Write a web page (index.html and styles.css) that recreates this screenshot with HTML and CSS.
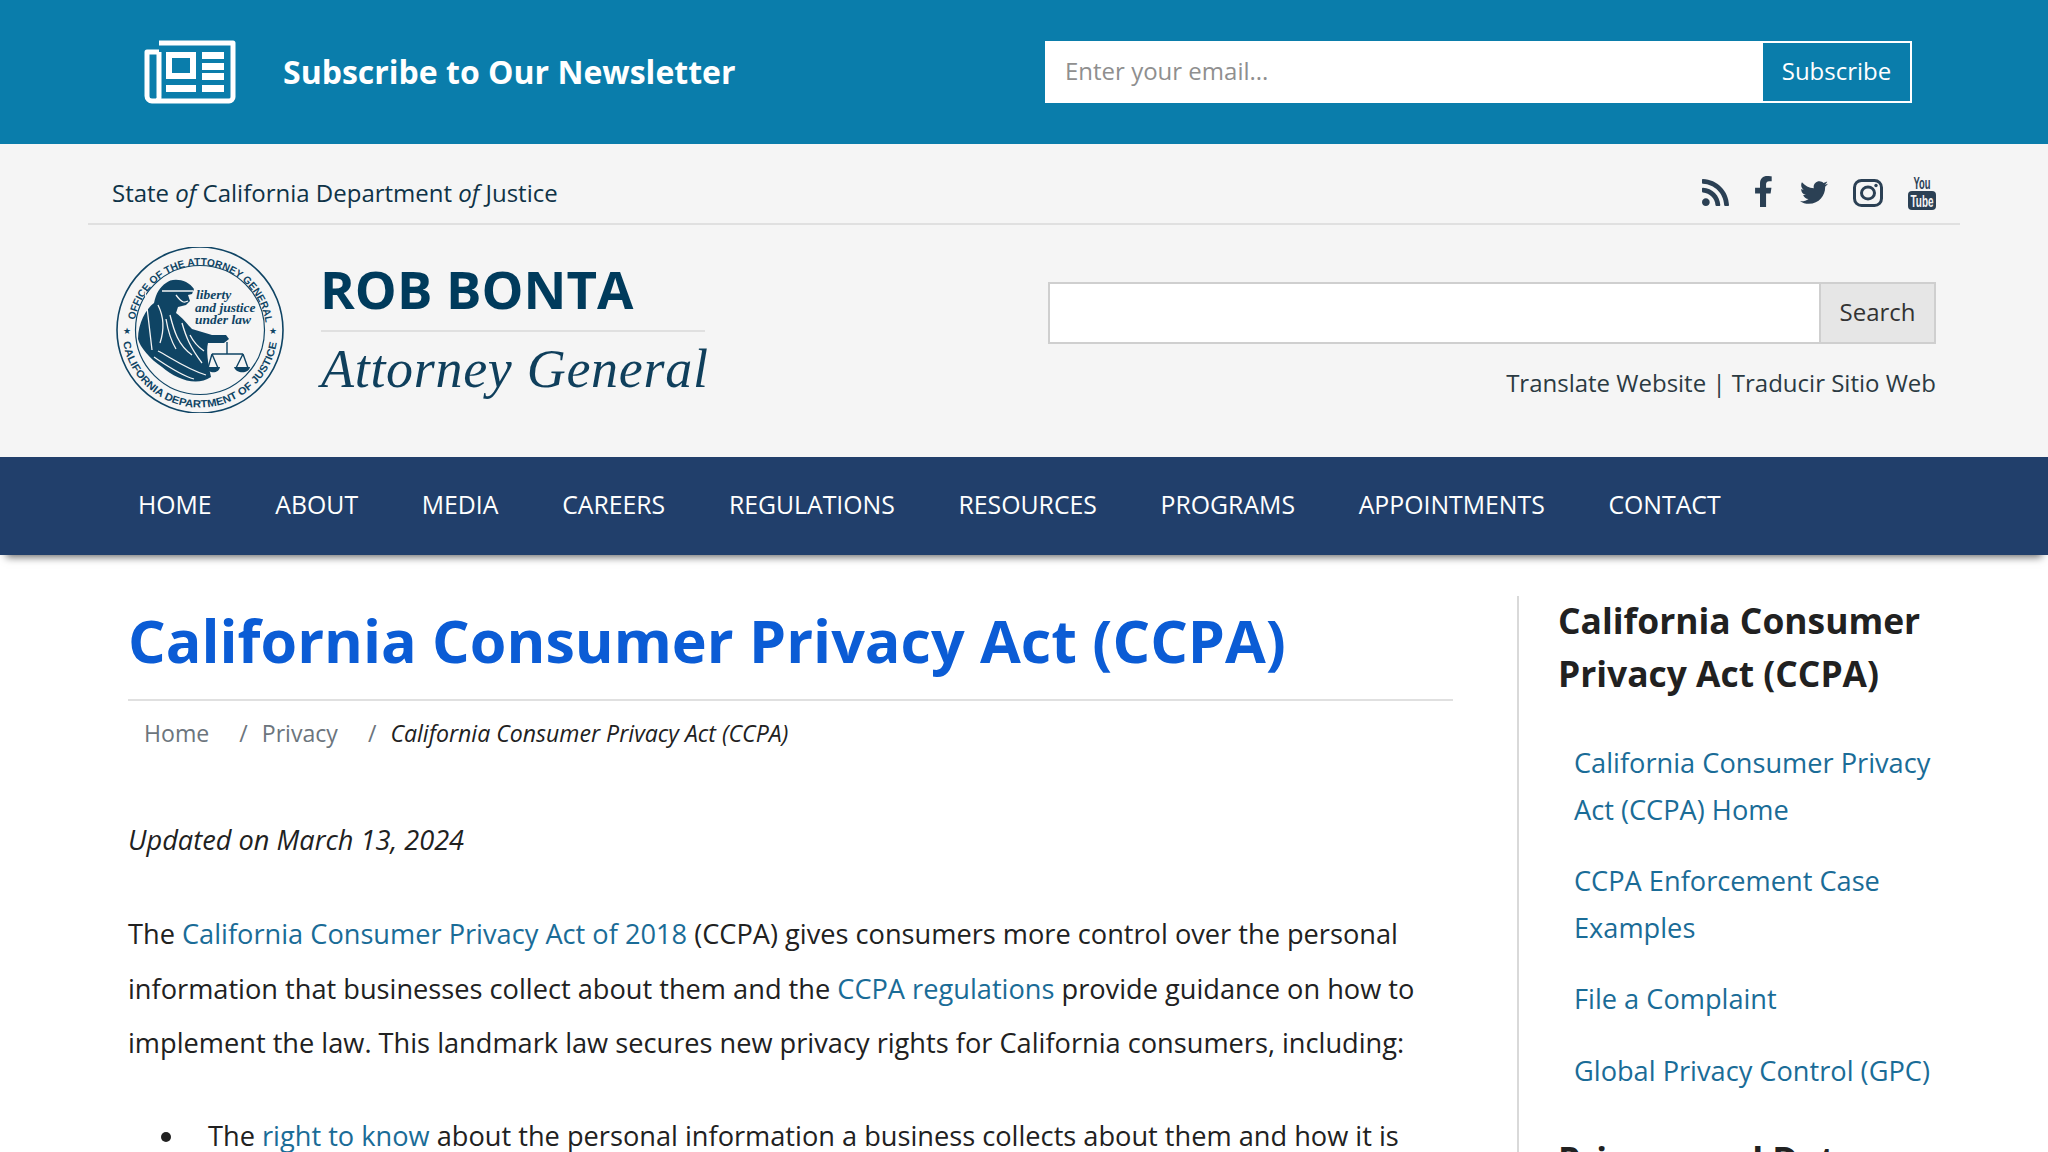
FILE: index.html
```html
<!DOCTYPE html>
<html lang="en">
<head>
<meta charset="utf-8">
<title>California Consumer Privacy Act (CCPA)</title>
<link rel="stylesheet" href="styles.css">
</head>
<body>
<section class="newsletter">
  <div class="news-left">
    <svg class="news-icon" viewBox="0 0 92 64" aria-hidden="true">
      <path class="news-frame" d="M15 3H89V57a4 4 0 0 1-4 4H8a5 5 0 0 1-5-5V12H15M15 12V56a4 4 0 0 1-4 5"/>
      <path class="news-fill" d="M22 12H52V39H22ZM28 18V33H46V18ZM58 12H80V19H58ZM58 23H80V30H58ZM58 33H80V40H58ZM22 45H52V52H22ZM58 45H80V52H58Z" fill-rule="evenodd"/>
    </svg>
    <h2 class="news-title">Subscribe to Our Newsletter</h2>
  </div>
  <form class="news-form">
    <div class="news-input">Enter your email...</div>
    <div class="news-btn">Subscribe</div>
  </form>
</section>

<header class="site-head">
  <div class="head-top">
    <div class="dept">State <em>of</em> California Department <em>of</em> Justice</div>
    <div class="social">
      <svg class="ic-rss" viewBox="0 32 448 448"><path d="M128.081 415.959c0 35.369-28.672 64.041-64.041 64.041S0 451.328 0 415.959s28.672-64.041 64.041-64.041 64.04 28.673 64.04 64.041zm175.66 47.25c-8.354-154.6-132.185-278.587-286.95-286.95C7.656 175.765 0 183.105 0 192.253v48.069c0 8.415 6.49 15.472 14.887 16.018 111.832 7.284 201.473 96.702 208.772 208.772.547 8.397 7.604 14.887 16.018 14.887h48.069c9.149.001 16.489-7.655 15.995-16.79zm144.249.288C439.596 229.677 251.465 40.445 16.503 32.01 7.473 31.686 0 38.981 0 48.016v48.068c0 8.625 6.835 15.645 15.453 15.999 191.179 7.839 344.627 161.316 352.465 352.465.353 8.618 7.373 15.453 15.999 15.453h48.068c9.034-.001 16.329-7.474 16.005-16.504z"/></svg>
      <svg class="ic-fb" viewBox="22 0 280 512"><path d="M279.14 288l14.22-92.66h-88.91v-60.13c0-25.35 12.42-50.06 52.24-50.06h40.42V6.26S260.43 0 225.36 0c-73.22 0-121.08 44.38-121.08 124.72v70.62H22.89V288h81.39v224h100.17V288z"/></svg>
      <svg class="ic-tw" viewBox="0 48 512 416"><path d="M459.37 151.716c.325 4.548.325 9.097.325 13.645 0 138.72-105.583 298.558-298.558 298.558-59.452 0-114.68-17.219-161.137-47.106 8.447.974 16.568 1.299 25.34 1.299 49.055 0 94.213-16.568 130.274-44.832-46.132-.975-84.792-31.188-98.112-72.772 6.498.974 12.995 1.624 19.818 1.624 9.421 0 18.843-1.3 27.614-3.573-48.081-9.747-84.143-51.98-84.143-102.985v-1.299c13.969 7.797 30.214 12.67 47.431 13.319-28.264-18.843-46.781-51.005-46.781-87.391 0-19.492 5.197-37.36 14.294-52.954 51.655 63.675 129.3 105.258 216.365 109.807-1.624-7.797-2.599-15.918-2.599-24.04 0-57.828 46.782-104.934 104.934-104.934 30.213 0 57.502 12.67 76.67 33.137 23.715-4.548 46.456-13.32 66.599-25.34-7.798 24.366-24.366 44.833-46.132 57.827 21.117-2.273 41.584-8.122 60.426-16.243-14.292 20.791-32.161 39.308-52.628 54.253z"/></svg>
      <svg class="ic-ig" viewBox="0 0 30 28"><rect class="ig-line" x="1.5" y="1.5" width="27" height="25" rx="7"/><ellipse class="ig-line" cx="15" cy="14" rx="6.5" ry="6"/><circle cx="23" cy="6.5" r="1.7"/></svg>
      <svg class="ic-yt" viewBox="0 0 28 34"><text class="yt-you" x="14" y="13" text-anchor="middle" textLength="17" lengthAdjust="spacingAndGlyphs">You</text><rect x="0" y="15" width="28" height="19" rx="4"/><text class="yt-tube" x="14" y="31" text-anchor="middle" textLength="23" lengthAdjust="spacingAndGlyphs">Tube</text></svg>
    </div>
  </div>
  <div class="head-main">
    <div class="brand">
      <svg class="seal" viewBox="0 0 168 166" aria-label="Seal of the Office of the Attorney General">
        <defs>
          <path id="arcTop" d="M19 73A66 66 0 0 1 149 73"/>
          <path id="arcBot" d="M7 95A78 78 0 0 0 161 95"/>
        </defs>
        <circle class="seal-ring" cx="84" cy="83" r="83"/>
        <circle class="seal-ring2" cx="84" cy="83" r="64.5"/>
        <text class="seal-txt"><textPath href="#arcTop" textLength="187" lengthAdjust="spacingAndGlyphs">OFFICE OF THE ATTORNEY GENERAL</textPath></text>
        <text class="seal-txt"><textPath href="#arcBot" textLength="219" lengthAdjust="spacingAndGlyphs">CALIFORNIA DEPARTMENT OF JUSTICE</textPath></text>
        <text class="seal-star" x="11" y="87" text-anchor="middle">★</text>
        <text class="seal-star" x="157" y="87" text-anchor="middle">★</text>
        <path class="seal-fig" d="M50 36C56 30 72 32 78 42L76 47 72 48 74 54 70 58 62 60 60 66C66 70 72 78 76 82L96 88 110 88 113 92 108 96 92 96C90 104 92 116 95 130 80 140 60 132 46 120 34 112 24 100 22 92 22 76 30 62 38 56 40 46 44 40 50 36Z"/>
        <path class="seal-gap" d="M29 43L36 103M46 44L77 44M42 58C48 70 48 84 44 96M54 68C58 84 62 98 76 108M66 76C70 90 74 100 86 116M42 104C54 110 70 122 90 128M38 110C50 118 64 128 78 132M60 48C66 56 68 56 72 54M50 72C52 84 54 92 60 102M74 88C78 96 82 100 88 104"/>
        <path class="seal-line" d="M111 95V107M96 107H127M96 107L92 121M96 107L102 121M127 107L120 121M127 107L132 121"/>
        <path class="seal-fig" d="M90 120H104C103 127 92 127 90 120ZM118 120H134C133 127 120 127 118 120Z"/>
        <text class="seal-motto" x="80" y="52">liberty</text>
        <text class="seal-motto" x="79" y="65">and justice</text>
        <text class="seal-motto" x="79" y="77">under law</text>
      </svg>
      <div class="brand-text">
        <div class="brand-name">ROB BONTA</div>
        <div class="brand-role">Attorney General</div>
      </div>
    </div>
    <div class="tools">
      <form class="search">
        <div class="search-input"></div>
        <div class="search-btn">Search</div>
      </form>
      <div class="translate">Translate Website | Traducir Sitio Web</div>
    </div>
  </div>
</header>

<nav class="nav">
  <a>HOME</a><a>ABOUT</a><a>MEDIA</a><a>CAREERS</a><a>REGULATIONS</a><a>RESOURCES</a><a>PROGRAMS</a><a>APPOINTMENTS</a><a>CONTACT</a>
</nav>

<div class="page">
  <main class="content">
    <h1 class="title">California Consumer Privacy Act (CCPA)</h1>
    <ol class="crumbs">
      <li class="crumb-link">Home</li>
      <li class="crumb-sep">/</li>
      <li class="crumb-link">Privacy</li>
      <li class="crumb-sep">/</li>
      <li class="crumb-here">California Consumer Privacy Act (CCPA)</li>
    </ol>
    <p class="updated">Updated on March 13, 2024</p>
    <p class="para">The <a>California Consumer Privacy Act of 2018</a> (CCPA) gives consumers more control over the personal information that businesses collect about them and the <a>CCPA regulations</a> provide guidance on how to implement the law. This landmark law secures new privacy rights for California consumers, including:</p>
    <ul class="rights">
      <li><div>The <a>right to know</a> about the personal information a business collects about them and how it is used and shared;</div></li>
    </ul>
  </main>
  <aside class="side">
    <h2 class="side-title">California Consumer Privacy Act (CCPA)</h2>
    <ul class="side-links">
      <li><a>California Consumer Privacy Act (CCPA) Home</a></li>
      <li><a>CCPA Enforcement Case Examples</a></li>
      <li><a>File a Complaint</a></li>
      <li><a>Global Privacy Control (GPC)</a></li>
    </ul>
    <h2 class="side-title">Privacy and Data Protection</h2>
  </aside>
</div>
</body>
</html>
```

FILE: styles.css
```css
* { box-sizing: border-box; }
html, body { margin: 0; height: 1152px; overflow: hidden; }
body { font-family: "Open Sans", "Noto Sans", sans-serif; background: #fff; color: #212121; }
a { color: #1a6c97; text-decoration: none; }

/* newsletter */
.newsletter { height: 144px; background: #0a7dab; display: flex; align-items: center; justify-content: space-between; padding: 0 136px 0 144px; }
.news-left { display: flex; align-items: center; gap: 47px; }
.news-icon { width: 92px; height: 64px; display: block; }
.news-frame { fill: none; stroke: #fff; stroke-width: 5; stroke-linejoin: round; }
.news-fill { fill: #fff; }
.news-title { margin: 0; font-size: 32px; font-weight: 700; color: #fff; line-height: 44px; }
.news-form { display: flex; width: 867px; height: 62px; border: 2px solid #fff; }
.news-input { flex: 1; background: #fff; color: #8f8f8f; font-size: 24px; line-height: 56px; padding-left: 18px; }
.news-btn { width: 147px; color: #fff; font-size: 24px; line-height: 56px; text-align: center; }

/* header */
.site-head { height: 313px; background: #f5f5f5; padding: 0 88px; }
.head-top { height: 81px; display: flex; align-items: center; justify-content: space-between; padding: 18px 24px 0; border-bottom: 2px solid #e0e0e0; }
.dept { font-size: 24px; color: #0f3347; }
.social { display: flex; align-items: center; gap: 25px; fill: #2b4054; }
.social svg { display: block; }
.ic-rss { width: 27px; height: 27px; }
.ic-fb { width: 17px; height: 31px; margin-left: 1px; margin-top: -3px; }
.ic-tw { width: 28px; height: 25px; margin-left: 3px; }
.ic-ig { width: 30px; height: 28px; }
.ic-yt { width: 28px; height: 34px; overflow: visible; }
.ig-line { fill: none; stroke: #2b4054; stroke-width: 3; }
.yt-you { font: 700 16px "Liberation Sans", sans-serif; }
.yt-tube { font: 700 16px "Liberation Sans", sans-serif; fill: #f5f5f5; }
.head-main { display: flex; justify-content: space-between; padding: 22px 24px 0 28px; }
.brand { display: flex; gap: 37px; }
.seal { width: 168px; height: 166px; display: block; }
.seal-ring { fill: none; stroke: #0f4464; stroke-width: 1.6; }
.seal-ring2 { fill: none; stroke: #0f4464; stroke-width: 1.2; }
.seal-txt { font: 700 10.5px "Liberation Sans", sans-serif; fill: #0f4464; }
.seal-star { font: 9px "DejaVu Sans", sans-serif; fill: #0f4464; }
.seal-fig { fill: #0f4464; }
.seal-gap { fill: none; stroke: #f5f5f5; stroke-width: 1.3; }
.seal-line { fill: none; stroke: #0f4464; stroke-width: 1.4; }
.seal-motto { font: italic 700 13.5px "Liberation Serif", serif; fill: #0f4464; }
.brand-text { width: 388px; }
.brand-name { font-size: 52.8px; font-weight: 700; color: #003b5c; line-height: 84px; height: 85px; border-bottom: 2px solid #e0e0e0; width: 384px; text-indent: -1px; }
.brand-role { font-family: "Liberation Serif", serif; font-style: italic; font-size: 54px; color: #0f3f5c; line-height: 74px; white-space: nowrap; letter-spacing: .7px; }
.tools { width: 888px; padding-top: 35px; }
.search { display: flex; height: 62px; border: 2px solid #cfcfcf; }
.search-input { flex: 1; background: #fff; }
.search-btn { width: 115px; background: #e6e6e6; border-left: 2px solid #cfcfcf; color: #333; font-size: 24px; line-height: 55px; text-align: center; }
.translate { margin-top: 22px; text-align: right; font-size: 24px; line-height: 34px; color: #2b3a42; }

/* nav */
.nav { height: 98px; background: #213f6b; display: flex; align-items: center; gap: 63.7px; padding: 0 0 4px 138px; box-shadow: 0 8px 8px -6px rgba(0,0,0,.6); position: relative; }
.nav a { color: #fff; font-size: 24.8px; }

/* page */
.page { display: flex; padding: 41px 0 0 128px; }
.content { width: 1325px; flex: none; }
.title { margin: 0; font-size: 59.2px; font-weight: 700; line-height: 88px; color: #0b5cd5; border-bottom: 2px solid #e0e0e0; height: 105px; }
.crumbs { list-style: none; margin: 0; padding: 15px 0 0 16px; display: flex; font-size: 23.1px; line-height: 34px; }
.crumb-link { color: #6c757d; }
.crumb-sep { color: #6c757d; margin: 0 14px 0 30px; }
.crumb-here { font-style: italic; color: #212121; }
.updated { margin: 69px 0 0; font-style: italic; font-size: 27.2px; line-height: 42px; }
.para { margin: 46px 0 0; font-size: 27.2px; line-height: 54.5px; }
.rights { list-style: none; margin: 38px 0 0; padding: 0 0 0 33px; font-size: 27.2px; line-height: 54.5px; }
.rights li { display: flex; }
.rights li::before { content: ""; flex: none; width: 10px; height: 10px; border-radius: 50%; background: #212121; margin: 23px 37px 0 0; }
.side { flex: 1; margin-left: 64px; border-left: 2px solid #d9d9d9; padding: 0 100px 0 39px; }
.side-title { margin: -2px 0 0; font-size: 35.4px; font-weight: 700; line-height: 52.5px; color: #212121; }
.side-links { list-style: none; margin: 41px 0 41px; padding: 0 0 0 16px; font-size: 27.2px; line-height: 46.5px; }
.side-links li { margin-bottom: 25px; }
```
